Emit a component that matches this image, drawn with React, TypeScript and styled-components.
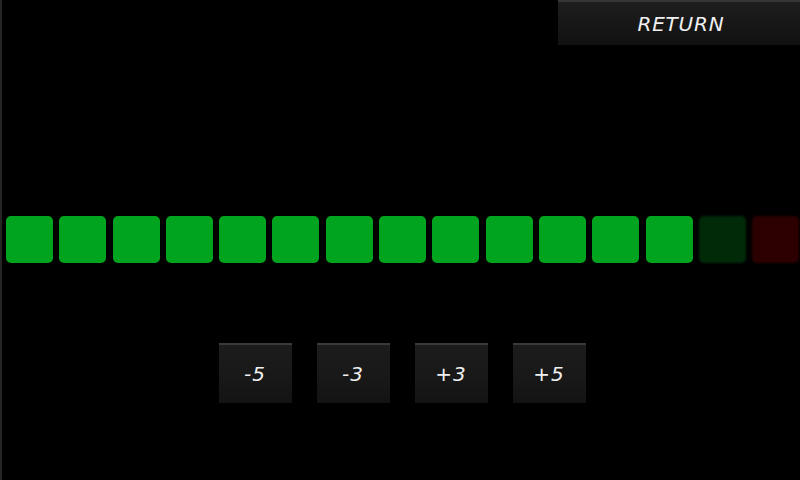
import React from "react";
import styled, { createGlobalStyle } from "styled-components";

const GlobalStyle = createGlobalStyle`
  html, body {
    margin: 0;
    padding: 0;
    background: #000;
  }
  #root {
    width: 800px;
    height: 480px;
  }
`;

const Screen = styled.div`
  width: 800px;
  height: 480px;
  box-sizing: border-box;
  background: #000;
  border-left: 2px solid #262626;
  display: flex;
  flex-direction: column;
  overflow: hidden;
  font-family: "DejaVu Sans", "Liberation Sans", sans-serif;
  font-style: oblique;
  color: #f2f2f2;
`;

const TopBar = styled.div`
  display: flex;
  justify-content: flex-end;
  height: 45px;
`;

const ReturnButton = styled.button`
  width: 242px;
  height: 45px;
  border: none;
  border-top: 2px solid #363636;
  background: linear-gradient(180deg, #1e1e1e 0%, #161616 60%, #111 100%);
  color: #f0f0f0;
  font-family: inherit;
  font-style: oblique;
  font-size: 20px;
  letter-spacing: 0.8px;
  padding: 0 0 0 4px;
  cursor: pointer;
`;

const LevelRow = styled.div`
  display: flex;
  gap: 6.3px;
  padding-left: 4px;
  margin-top: 171px;
`;

type Level = "on" | "offGreen" | "offRed";

const Cell = styled.div<{ $level: Level }>`
  flex: 0 0 47px;
  height: 47px;
  border-radius: 5px;
  background: ${(p) =>
    p.$level === "on" ? "#00a41e" : p.$level === "offGreen" ? "#002a08" : "#2c0000"};
  filter: ${(p) => (p.$level === "on" ? "none" : "blur(1px)")};
`;

const StepRow = styled.div`
  display: flex;
  justify-content: center;
  gap: 25px;
  margin-top: 80px;
  padding-left: 2px;
`;

const StepButton = styled.button`
  width: 73px;
  height: 60px;
  border: none;
  border-top: 2px solid #3a3a3a;
  background: linear-gradient(180deg, #1c1c1c 0%, #181818 60%, #131313 100%);
  box-shadow: 0 2px 3px rgba(0, 0, 0, 0.8);
  color: #f0f0f0;
  font-family: inherit;
  font-style: oblique;
  font-size: 20px;
  letter-spacing: 1px;
  padding: 0;
  cursor: pointer;
`;

const levels: Level[] = [
  ...Array.from({ length: 13 }, () => "on" as Level),
  "offGreen",
  "offRed",
];

const steps = ["-5", "-3", "+3", "+5"];

export default function App() {
  return (
    <>
      <GlobalStyle />
      <Screen>
        <TopBar>
          <ReturnButton>RETURN</ReturnButton>
        </TopBar>
        <LevelRow>
          {levels.map((l, i) => (
            <Cell key={i} $level={l} />
          ))}
        </LevelRow>
        <StepRow>
          {steps.map((s) => (
            <StepButton key={s}>{s}</StepButton>
          ))}
        </StepRow>
      </Screen>
    </>
  );
}
